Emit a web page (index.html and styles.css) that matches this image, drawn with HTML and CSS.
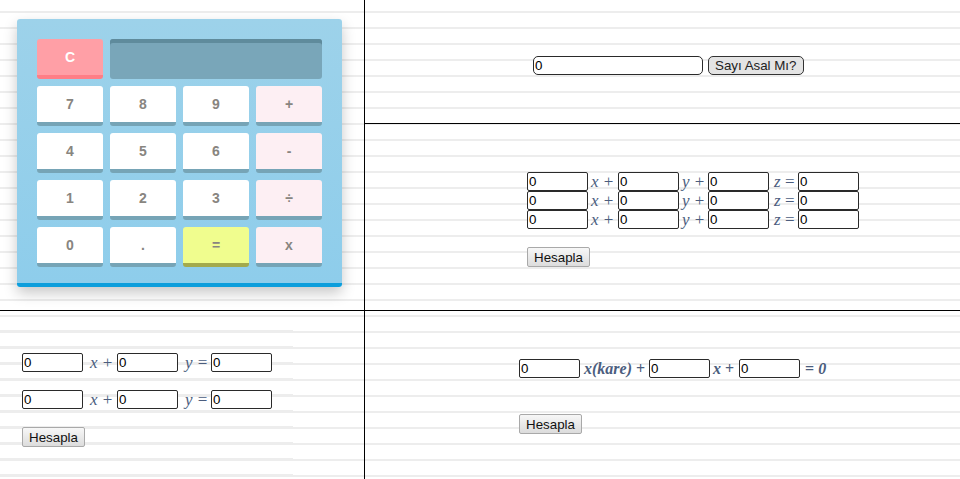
FILE: index.html
```html
<!DOCTYPE html>
<html lang="tr">
<head>
<meta charset="utf-8">
<title>Hesap Makinesi</title>
<link rel="stylesheet" href="styles.css">
</head>
<body>
<div class="page">
  <div class="row top">
    <div class="cell left">
      <div class="calc">
        <div class="keys">
          <div class="key clear">C</div>
          <div class="screen"></div>
          <div class="key">7</div>
          <div class="key">8</div>
          <div class="key">9</div>
          <div class="key op">+</div>
          <div class="key">4</div>
          <div class="key">5</div>
          <div class="key">6</div>
          <div class="key op">-</div>
          <div class="key">1</div>
          <div class="key">2</div>
          <div class="key">3</div>
          <div class="key op">÷</div>
          <div class="key">0</div>
          <div class="key">.</div>
          <div class="key eq">=</div>
          <div class="key op">x</div>
        </div>
      </div>
    </div>
    <div class="cell right">
      <div class="prime">
        <input class="field wide" type="text" value="0">
        <button class="pill">Sayı Asal Mı?</button>
      </div>
      <div class="system3">
        <div class="eqrow">
          <input class="field" type="text" value="0"><span class="lbl e3x"><i>x</i>&nbsp;+</span>
          <input class="field" type="text" value="0"><span class="lbl e3y"><i>y</i>&nbsp;+</span>
          <input class="field" type="text" value="0"><span class="lbl e3z"><i>z</i>&nbsp;=</span>
          <input class="field" type="text" value="0">
        </div>
        <div class="eqrow">
          <input class="field" type="text" value="0"><span class="lbl e3x"><i>x</i>&nbsp;+</span>
          <input class="field" type="text" value="0"><span class="lbl e3y"><i>y</i>&nbsp;+</span>
          <input class="field" type="text" value="0"><span class="lbl e3z"><i>z</i>&nbsp;=</span>
          <input class="field" type="text" value="0">
        </div>
        <div class="eqrow">
          <input class="field" type="text" value="0"><span class="lbl e3x"><i>x</i>&nbsp;+</span>
          <input class="field" type="text" value="0"><span class="lbl e3y"><i>y</i>&nbsp;+</span>
          <input class="field" type="text" value="0"><span class="lbl e3z"><i>z</i>&nbsp;=</span>
          <input class="field" type="text" value="0">
        </div>
        <button class="calc-btn gap18">Hesapla</button>
      </div>
    </div>
  </div>
  <div class="row bottom">
    <div class="cell left">
      <div class="system2">
        <div class="eqrow">
          <input class="field" type="text" value="0"><span class="lbl e2x"><i>x</i>&nbsp;+</span>
          <input class="field" type="text" value="0"><span class="lbl e2y"><i>y</i>&nbsp;=</span>
          <input class="field" type="text" value="0">
        </div>
        <div class="eqrow sp">
          <input class="field" type="text" value="0"><span class="lbl e2x"><i>x</i>&nbsp;+</span>
          <input class="field" type="text" value="0"><span class="lbl e2y"><i>y</i>&nbsp;=</span>
          <input class="field" type="text" value="0">
        </div>
        <button class="calc-btn gap18">Hesapla</button>
      </div>
    </div>
    <div class="cell right">
      <div class="quad">
        <div class="eqrow">
          <input class="field" type="text" value="0"><span class="lbl bold qa"><i>x(kare)</i>&nbsp;+</span>
          <input class="field" type="text" value="0"><span class="lbl bold qb"><i>x</i>&nbsp;+</span>
          <input class="field" type="text" value="0"><span class="lbl bold qc">=&nbsp;<i>0</i></span>
        </div>
        <button class="calc-btn gap36">Hesapla</button>
      </div>
    </div>
  </div>
</div>
</body>
</html>
```

FILE: styles.css
```css
* { box-sizing: border-box; }

html, body {
  margin: 0;
  padding: 0;
}

body {
  font-family: "Liberation Sans", Arial, sans-serif;
  background-color: #fff;
  background-image: repeating-linear-gradient(to bottom,
    transparent 0, transparent 11px,
    #ededed 11px, #ededed 13px,
    transparent 13px, transparent 16px);
}

.page {
  width: 960px;
  height: 479px;
  display: flex;
  flex-direction: column;
  overflow: hidden;
}

.row {
  display: flex;
}

.top {
  height: 311px;
  border-bottom: 1px solid #000;
}

.bottom {
  flex: 1;
}

.cell.left {
  width: 365px;
  flex: none;
  border-right: 1px solid #000;
}

.cell.right {
  flex: 1;
  display: flex;
  flex-direction: column;
}

/* ---------- calculator ---------- */
.calc {
  margin: 19px 0 0 17px;
  width: 325px;
  padding: 20px 20px 16px;
  background: linear-gradient(to bottom, #9dd2ea, #8ecdeb);
  border-bottom: 4px solid #0c9edc;
  border-radius: 3px;
  box-shadow: 0 6px 14px rgba(0, 0, 0, 0.22);
}

.keys {
  display: grid;
  grid-template-columns: repeat(4, 66px);
  grid-auto-rows: 40px;
  gap: 7px;
}

.key {
  display: flex;
  align-items: center;
  justify-content: center;
  background: #fff;
  border-bottom: 4px solid #76a4b6;
  border-radius: 3px;
  font-size: 14px;
  font-weight: bold;
  color: #888580;
}

.key.op {
  background: #fdeff3;
}

.key.eq {
  background: #f0fd8e;
  border-bottom-color: #a3aa4d;
}

.key.clear {
  background: #ff9fa6;
  border-bottom-color: #ff7e86;
  color: #fff;
}

.screen {
  grid-column: span 3;
  background: #79a6b9;
  border-radius: 3px;
  box-shadow: inset 0 4px 0 #5f8b9c;
}

/* ---------- form controls ---------- */
.field {
  flex: none;
  width: 61px;
  height: 19px;
  margin: 0;
  padding: 0 1px;
  border: 1px solid #2a2a2a;
  border-radius: 2px;
  background: #fff;
  font-family: "Liberation Sans", Arial, sans-serif;
  font-size: 13.33px;
  color: #000;
}

.field.wide {
  width: 170px;
  border-radius: 5px;
}

.pill {
  height: 19px;
  margin: 0;
  padding: 0 6px;
  border: 1px solid #333;
  border-radius: 5px;
  background: #e4e4e4;
  font-family: "Liberation Sans", Arial, sans-serif;
  font-size: 13.33px;
  color: #222;
}

.calc-btn {
  display: block;
  width: 63px;
  height: 20px;
  margin: 0;
  padding: 0;
  border: 1px solid #a9a9a9;
  border-radius: 2px;
  background: linear-gradient(to bottom, #f7f7f7, #dcdcdc);
  font-family: "Liberation Sans", Arial, sans-serif;
  font-size: 13.33px;
  color: #111;
}

.gap18 { margin-top: 18px; }
.gap36 { margin-top: 36px; }

.eqrow {
  display: flex;
  align-items: center;
  height: 19px;
}

.eqrow.sp { margin-top: 18px; }

.lbl {
  flex: none;
  font-family: "Liberation Serif", "Times New Roman", serif;
  font-size: 17px;
  word-spacing: 1px;
  color: #4b5d7e;
  white-space: nowrap;
  line-height: 19px;
  overflow: hidden;
}

.lbl.bold {
  font-weight: bold;
  font-size: 16px;
  word-spacing: 0;
  overflow: visible;
}

.e3x { width: 30px; padding-left: 3px; }
.e3y { width: 29px; padding-left: 3px; }
.e3z { width: 29px; padding-left: 5px; word-spacing: 0; }
.e2x { width: 34px; padding-left: 7px; }
.e2y { width: 33px; padding-left: 7px; }
.qa  { width: 69px; padding-left: 4px; }
.qb  { width: 29px; padding-left: 3px; }
.qc  { padding-left: 5px; }

/* ---------- sections ---------- */
.prime {
  height: 124px;
  flex: none;
  border-bottom: 1px solid #000;
  padding: 56px 0 0 168px;
  display: flex;
  align-items: flex-start;
  gap: 5px;
}

.system3 {
  flex: 1;
  padding: 48px 0 0 162px;
}

.system2 {
  margin-top: 6px;
  width: 293px;
  height: 162px;
  padding: 36px 0 0 22px;
  background-image: repeating-linear-gradient(to bottom,
    transparent 0, transparent 13px,
    #ededed 13px, #ededed 15px,
    transparent 15px, transparent 16px);
}

.quad {
  padding: 48px 0 0 154px;
}
```
